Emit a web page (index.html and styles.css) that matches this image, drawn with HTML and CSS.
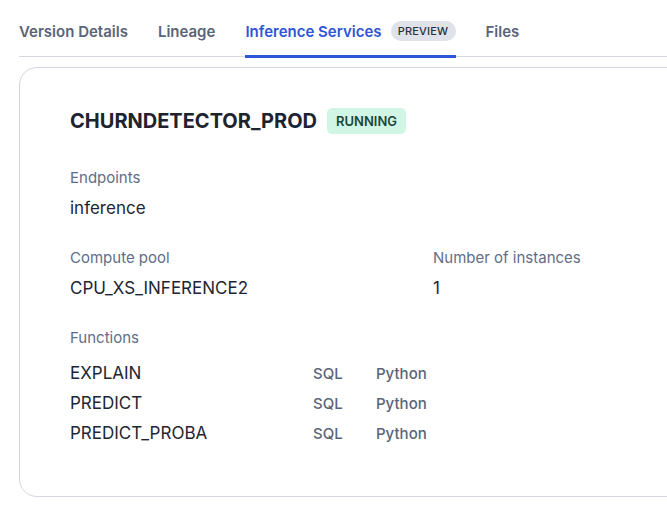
FILE: index.html
```html
<!DOCTYPE html>
<html>
<head>
<meta charset="utf-8">
<link rel="stylesheet" href="styles.css">
</head>
<body>
<div class="page">
  <nav class="tabs">
    <div class="tab">Version Details</div>
    <div class="tab">Lineage</div>
    <div class="tab active">Inference Services <span class="pill">PREVIEW</span></div>
    <div class="tab">Files</div>
  </nav>
  <section class="card">
    <div class="title-row">
      <h1 class="title">CHURNDETECTOR_PROD</h1>
      <span class="status">RUNNING</span>
    </div>
    <div class="field">
      <div class="label">Endpoints</div>
      <div class="value">inference</div>
    </div>
    <div class="pair">
      <div class="field">
        <div class="label">Compute pool</div>
        <div class="value">CPU_XS_INFERENCE2</div>
      </div>
      <div class="field">
        <div class="label">Number of instances</div>
        <div class="value">1</div>
      </div>
    </div>
    <div class="field">
      <div class="label">Functions</div>
      <div class="funcs">
        <div class="fname">EXPLAIN</div><div class="lang">SQL</div><div class="lang">Python</div>
        <div class="fname">PREDICT</div><div class="lang">SQL</div><div class="lang">Python</div>
        <div class="fname">PREDICT_PROBA</div><div class="lang">SQL</div><div class="lang">Python</div>
      </div>
    </div>
  </section>
</div>
</body>
</html>
```

FILE: styles.css
```css
html, body {
  margin: 0;
  padding: 0;
  background: #ffffff;
  overflow: hidden;
}
body {
  font-family: Inter, "Noto Sans", sans-serif;
  color: #1e2533;
}
.page {
  width: 760px;
  padding-left: 19px;
}
.tabs {
  display: flex;
  gap: 30px;
  height: 57px;
  border-bottom: 1px solid #d5d8e0;
  box-sizing: border-box;
  align-items: stretch;
}
.tab {
  display: flex;
  align-items: center;
  gap: 9px;
  font-size: 15px;
  font-weight: 600;
  color: #5a6478;
  padding-top: 9px;
  box-sizing: border-box;
  border-bottom: 3px solid transparent;
  margin-bottom: -2px;
  padding-bottom: 2px;
}
.tab.active {
  color: #2f56d6;
  border-bottom-color: #2f56d6;
}
.pill {
  display: inline-flex;
  align-items: center;
  justify-content: center;
  width: 65px;
  height: 20px;
  border-radius: 10px;
  background: #dfe2e9;
  color: #2a303c;
  font-size: 11px;
  font-weight: 500;
  letter-spacing: 0.2px;
}
.card {
  margin-top: 10px;
  width: 720px;
  height: 430px;
  box-sizing: border-box;
  border: 1px solid #d3d6df;
  border-radius: 18px;
  padding: 40px 0 0 50px;
}
.title-row {
  display: flex;
  align-items: center;
  gap: 10px;
  height: 26px;
}
.title {
  margin: 0;
  font-size: 20px;
  line-height: 26px;
  font-weight: 700;
  color: #1e2330;
}
.status {
  display: inline-flex;
  align-items: center;
  height: 26px;
  padding: 0 9px;
  border-radius: 5px;
  background: #d2f6e6;
  color: #19483a;
  font-size: 13px;
  font-weight: 600;
}
.field {
  margin-top: 34px;
}
.pair .field,
.pair + .field {
  margin-top: 28px;
}
.title-row + .field {
  margin-top: 34px;
}
.pair {
  display: grid;
  grid-template-columns: 363px 1fr;
}
.label {
  font-size: 15px;
  line-height: 20px;
  color: #616d87;
}
.value {
  margin-top: 8px;
  font-size: 17px;
  line-height: 24px;
  color: #1e2533;
}
.funcs {
  margin-top: 10px;
  display: grid;
  grid-template-columns: 243px 63px auto;
  justify-content: start;
  grid-auto-rows: 30px;
  align-items: center;
}
.fname {
  font-size: 17px;
  color: #1e2533;
}
.lang {
  font-size: 15px;
  font-weight: 500;
  color: #5a6478;
}
```
